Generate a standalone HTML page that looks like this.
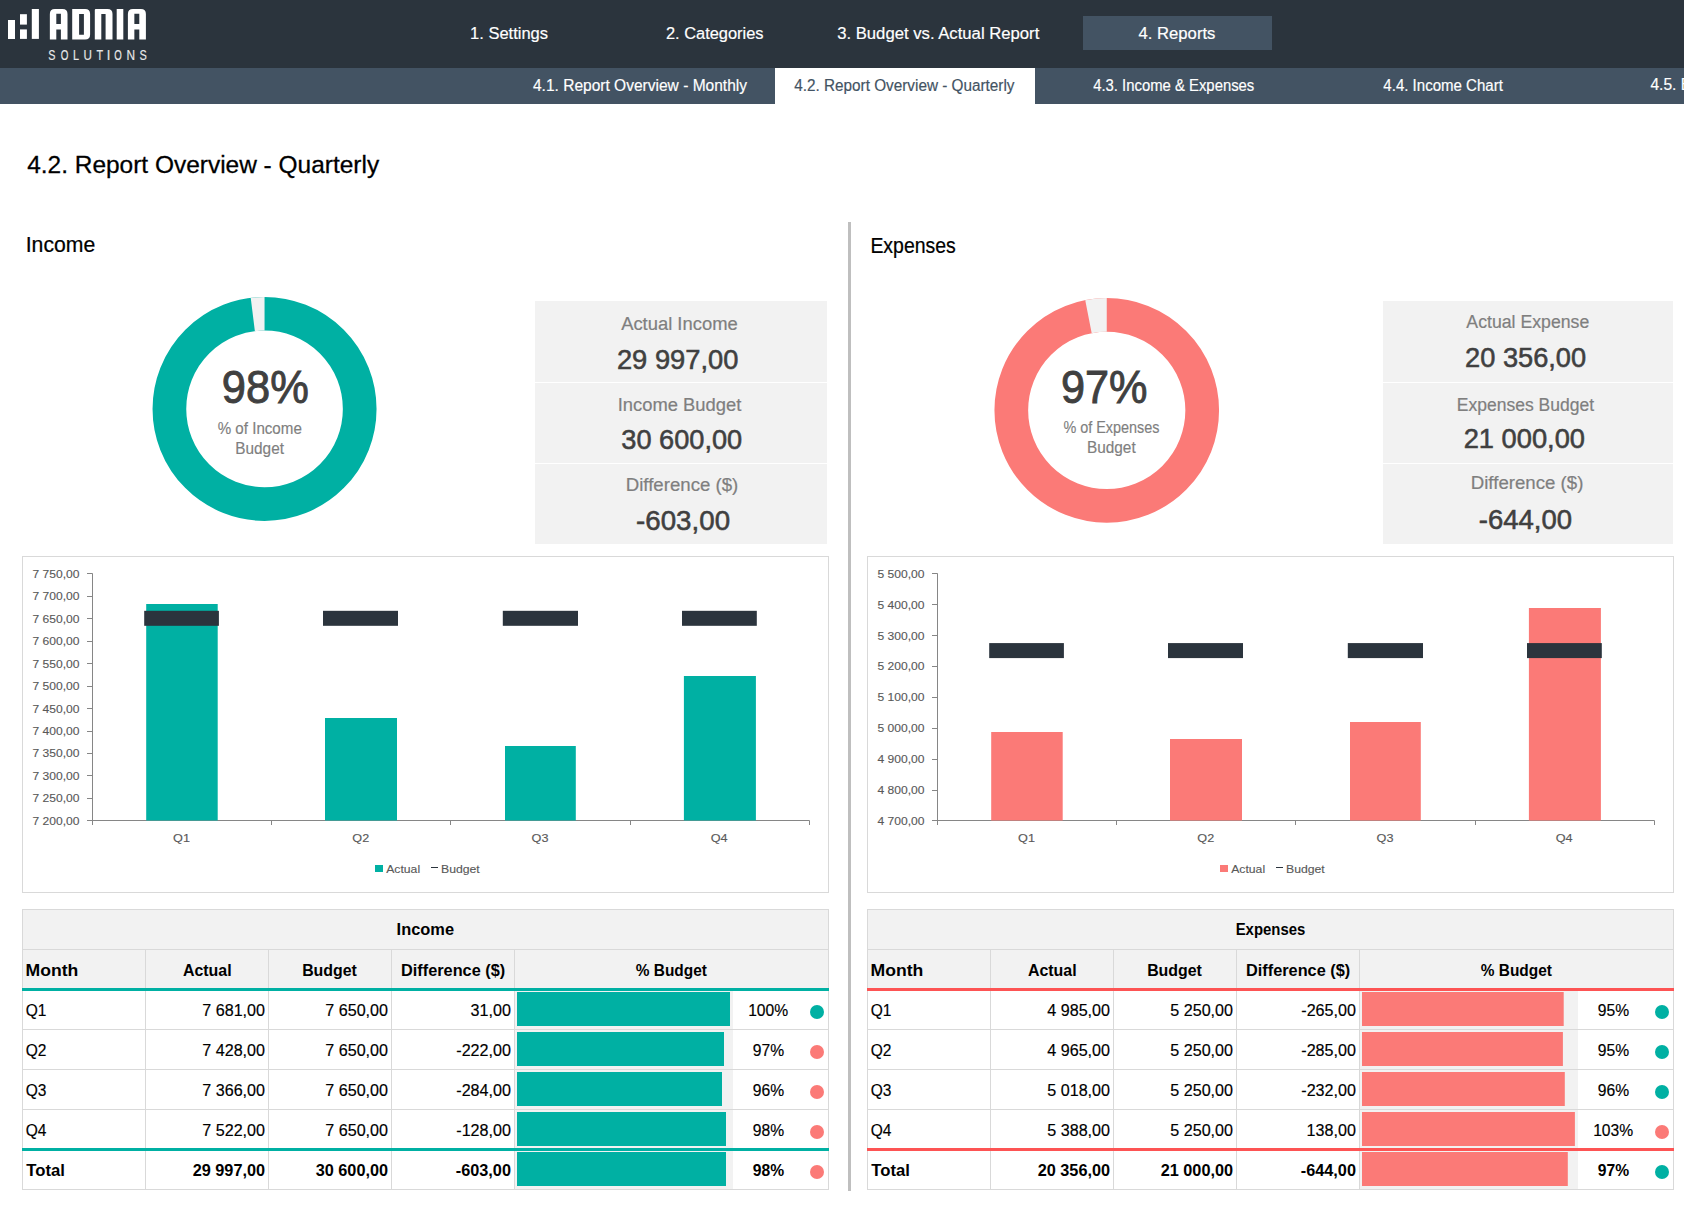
<!DOCTYPE html>
<html><head><meta charset="utf-8"><title>4.2. Report Overview - Quarterly</title>
<style>html,body{margin:0;padding:0;background:#fff;width:1688px;height:1208px;overflow:hidden;font-family:"Liberation Sans",sans-serif}</style>
</head><body>
<svg width="1688" height="1208" viewBox="0 0 1688 1208" style="position:absolute;left:0;top:0" font-family="Liberation Sans, sans-serif">
<rect x="0" y="0" width="1688" height="1208" fill="#fff"/>
<rect x="0" y="0" width="1684" height="68" fill="#2b343d"/>
<rect x="0" y="68" width="1684" height="36" fill="#435363"/>
<rect x="1083" y="16" width="189" height="34" fill="#435363"/>
<rect x="775" y="68" width="260" height="36" fill="#fff"/>
<g fill="#fff">
<rect x="8" y="20" width="7" height="19"/>
<rect x="20" y="14.2" width="6.9" height="10.4"/>
<rect x="20" y="29.4" width="6.9" height="9.5"/>
<rect x="31.8" y="9" width="7.1" height="29.9"/>
<path fill-rule="evenodd" d="M49.85,39.5 V14 Q49.85,9 54.85,9 H62.5 Q67.5,9 67.5,14 V39.5 H60.9 V29.6 H56.300000000000004 V39.5 Z M56.300000000000004,13.7 H60.9 V24 H56.300000000000004 Z"/>
<path fill-rule="evenodd" d="M72.2,9 H85.1 Q90.1,9 90.1,14 V34.5 Q90.1,39.5 85.1,39.5 H72.2 Z M79.1,14 H83.9 V34.7 H79.1 Z"/>
<path d="M94.8,39.5 V10 Q94.8,9 95.8,9 H107.5 Q112.5,9 112.5,14 V39.5 H105.6 V14 H101.3 V39.5 Z"/>
<rect x="116.7" y="9" width="6.6" height="30.5"/>
<path fill-rule="evenodd" d="M127.9,39.5 V14 Q127.9,9 132.9,9 H140.9 Q145.9,9 145.9,14 V39.5 H139.3 V29.6 H134.35 V39.5 Z M134.35,13.7 H139.3 V24 H134.35 Z"/>
</g>
<text x="48.32" y="59.70" font-size="13.80" font-weight="normal" fill="#e8e8e8" stroke="#e8e8e8" stroke-width="0.15" textLength="7.16" lengthAdjust="spacingAndGlyphs">S</text>
<text x="60.63" y="59.70" font-size="13.80" font-weight="normal" fill="#e8e8e8" stroke="#e8e8e8" stroke-width="0.15" textLength="7.64" lengthAdjust="spacingAndGlyphs">O</text>
<text x="73.00" y="59.70" font-size="13.80" font-weight="normal" fill="#e8e8e8" stroke="#e8e8e8" stroke-width="0.15" textLength="6.07" lengthAdjust="spacingAndGlyphs">L</text>
<text x="83.50" y="59.70" font-size="13.80" font-weight="normal" fill="#e8e8e8" stroke="#e8e8e8" stroke-width="0.15" textLength="8.40" lengthAdjust="spacingAndGlyphs">U</text>
<text x="96.46" y="59.70" font-size="13.80" font-weight="normal" fill="#e8e8e8" stroke="#e8e8e8" stroke-width="0.15" textLength="6.60" lengthAdjust="spacingAndGlyphs">T</text>
<text x="106.80" y="59.70" font-size="13.80" font-weight="normal" fill="#e8e8e8" stroke="#e8e8e8" stroke-width="0.15" textLength="3.60" lengthAdjust="spacingAndGlyphs">I</text>
<text x="114.24" y="59.70" font-size="13.80" font-weight="normal" fill="#e8e8e8" stroke="#e8e8e8" stroke-width="0.15" textLength="7.52" lengthAdjust="spacingAndGlyphs">O</text>
<text x="126.52" y="59.70" font-size="13.80" font-weight="normal" fill="#e8e8e8" stroke="#e8e8e8" stroke-width="0.15" textLength="8.55" lengthAdjust="spacingAndGlyphs">N</text>
<text x="139.61" y="59.70" font-size="13.80" font-weight="normal" fill="#e8e8e8" stroke="#e8e8e8" stroke-width="0.15" textLength="7.28" lengthAdjust="spacingAndGlyphs">S</text>
<text x="470.06" y="39.30" font-size="16.70" font-weight="normal" fill="#fff" stroke="#fff" stroke-width="0.18" textLength="78.02" lengthAdjust="spacingAndGlyphs">1. Settings</text>
<text x="665.98" y="39.30" font-size="16.70" font-weight="normal" fill="#fff" stroke="#fff" stroke-width="0.18" textLength="97.60" lengthAdjust="spacingAndGlyphs">2. Categories</text>
<text x="837.17" y="39.30" font-size="16.70" font-weight="normal" fill="#fff" stroke="#fff" stroke-width="0.18" textLength="202.17" lengthAdjust="spacingAndGlyphs">3. Budget vs. Actual Report</text>
<text x="1138.53" y="39.30" font-size="16.70" font-weight="normal" fill="#fff" stroke="#fff" stroke-width="0.18" textLength="76.87" lengthAdjust="spacingAndGlyphs">4. Reports</text>
<text x="532.95" y="91.00" font-size="16.00" font-weight="normal" fill="#fff" stroke="#fff" stroke-width="0.18" textLength="214.10" lengthAdjust="spacingAndGlyphs">4.1. Report Overview - Monthly</text>
<text x="794.26" y="91.00" font-size="16.00" font-weight="normal" fill="#435363" stroke="#435363" stroke-width="0.18" textLength="220.27" lengthAdjust="spacingAndGlyphs">4.2. Report Overview - Quarterly</text>
<text x="1093.17" y="90.60" font-size="16.00" font-weight="normal" fill="#fff" stroke="#fff" stroke-width="0.18" textLength="161.15" lengthAdjust="spacingAndGlyphs">4.3. Income &amp; Expenses</text>
<text x="1383.36" y="90.60" font-size="16.00" font-weight="normal" fill="#fff" stroke="#fff" stroke-width="0.18" textLength="119.47" lengthAdjust="spacingAndGlyphs">4.4. Income Chart</text>
<clipPath id="cp45"><rect x="0" y="68" width="1684" height="36"/></clipPath>
<text x="1650.45" y="90.40" font-size="16.00" font-weight="normal" fill="#fff" stroke="#fff" stroke-width="0.18" textLength="140.74" lengthAdjust="spacingAndGlyphs" clip-path="url(#cp45)">4.5. Expenses Chart</text>
<text x="27.15" y="173.10" font-size="24.40" font-weight="normal" fill="#000" stroke="#000" stroke-width="0.27" textLength="351.99" lengthAdjust="spacingAndGlyphs">4.2. Report Overview - Quarterly</text>
<text x="25.74" y="251.90" font-size="21.70" font-weight="normal" fill="#000" stroke="#000" stroke-width="0.24" textLength="69.50" lengthAdjust="spacingAndGlyphs">Income</text>
<text x="870.40" y="252.60" font-size="21.70" font-weight="normal" fill="#000" stroke="#000" stroke-width="0.24" textLength="85.37" lengthAdjust="spacingAndGlyphs">Expenses</text>
<rect x="848" y="222" width="3" height="969" fill="#bfbfbf"/>
<circle cx="264.55" cy="408.9" r="95.15" fill="none" stroke="#00b0a3" stroke-width="33.70"/>
<path fill="#f2f2f2" d="M250.72,297.76 A112,112 0 0 1 264.55,296.90 L264.55,330.60 A78.3,78.3 0 0 0 254.88,331.20 Z"/>
<circle cx="1106.75" cy="410.35" r="95.45" fill="none" stroke="#fb7a77" stroke-width="33.70"/>
<path fill="#f2f2f2" d="M1085.25,300.13 A112.3,112.3 0 0 1 1106.75,298.05 L1106.75,331.75 A78.6,78.6 0 0 0 1091.70,333.20 Z"/>
<text x="221.84" y="402.60" font-size="45.50" font-weight="normal" fill="#404040" stroke="#404040" stroke-width="0.91" textLength="86.94" lengthAdjust="spacingAndGlyphs">98%</text>
<text x="217.67" y="433.90" font-size="15.80" font-weight="normal" fill="#7f7f7f" stroke="#7f7f7f" stroke-width="0.17" textLength="84.19" lengthAdjust="spacingAndGlyphs">% of Income</text>
<text x="235.23" y="453.90" font-size="15.80" font-weight="normal" fill="#7f7f7f" stroke="#7f7f7f" stroke-width="0.17" textLength="48.78" lengthAdjust="spacingAndGlyphs">Budget</text>
<text x="1060.95" y="402.60" font-size="45.50" font-weight="normal" fill="#404040" stroke="#404040" stroke-width="0.91" textLength="86.52" lengthAdjust="spacingAndGlyphs">97%</text>
<text x="1063.40" y="432.60" font-size="15.80" font-weight="normal" fill="#7f7f7f" stroke="#7f7f7f" stroke-width="0.17" textLength="96.12" lengthAdjust="spacingAndGlyphs">% of Expenses</text>
<text x="1086.93" y="452.50" font-size="15.80" font-weight="normal" fill="#7f7f7f" stroke="#7f7f7f" stroke-width="0.17" textLength="48.78" lengthAdjust="spacingAndGlyphs">Budget</text>
<rect x="535" y="301" width="292" height="243" fill="#f2f2f2"/>
<rect x="535" y="382" width="292" height="1" fill="#fff"/>
<rect x="535" y="463" width="292" height="1" fill="#fff"/>
<rect x="1383" y="301" width="290" height="243" fill="#f2f2f2"/>
<rect x="1383" y="382" width="290" height="1" fill="#fff"/>
<rect x="1383" y="463" width="290" height="1" fill="#fff"/>
<text x="621.15" y="329.90" font-size="18.80" font-weight="normal" fill="#7f7f7f" stroke="#7f7f7f" stroke-width="0.21" textLength="116.56" lengthAdjust="spacingAndGlyphs">Actual Income</text>
<text x="616.94" y="368.90" font-size="27.40" font-weight="normal" fill="#404040" stroke="#404040" stroke-width="0.55" textLength="121.43" lengthAdjust="spacingAndGlyphs">29 997,00</text>
<text x="617.70" y="411.10" font-size="18.80" font-weight="normal" fill="#7f7f7f" stroke="#7f7f7f" stroke-width="0.21" textLength="123.62" lengthAdjust="spacingAndGlyphs">Income Budget</text>
<text x="621.28" y="448.70" font-size="27.40" font-weight="normal" fill="#404040" stroke="#404040" stroke-width="0.55" textLength="120.98" lengthAdjust="spacingAndGlyphs">30 600,00</text>
<text x="625.76" y="491.10" font-size="18.80" font-weight="normal" fill="#7f7f7f" stroke="#7f7f7f" stroke-width="0.21" textLength="112.55" lengthAdjust="spacingAndGlyphs">Difference ($)</text>
<text x="636.05" y="529.60" font-size="27.40" font-weight="normal" fill="#404040" stroke="#404040" stroke-width="0.55" textLength="94.03" lengthAdjust="spacingAndGlyphs">-603,00</text>
<text x="1466.36" y="328.10" font-size="18.80" font-weight="normal" fill="#7f7f7f" stroke="#7f7f7f" stroke-width="0.21" textLength="122.92" lengthAdjust="spacingAndGlyphs">Actual Expense</text>
<text x="1465.04" y="366.80" font-size="27.40" font-weight="normal" fill="#404040" stroke="#404040" stroke-width="0.55" textLength="121.12" lengthAdjust="spacingAndGlyphs">20 356,00</text>
<text x="1456.86" y="410.70" font-size="18.80" font-weight="normal" fill="#7f7f7f" stroke="#7f7f7f" stroke-width="0.21" textLength="137.20" lengthAdjust="spacingAndGlyphs">Expenses Budget</text>
<text x="1463.64" y="447.50" font-size="27.40" font-weight="normal" fill="#404040" stroke="#404040" stroke-width="0.55" textLength="121.43" lengthAdjust="spacingAndGlyphs">21 000,00</text>
<text x="1470.76" y="488.90" font-size="18.80" font-weight="normal" fill="#7f7f7f" stroke="#7f7f7f" stroke-width="0.21" textLength="112.65" lengthAdjust="spacingAndGlyphs">Difference ($)</text>
<text x="1478.76" y="528.70" font-size="27.40" font-weight="normal" fill="#404040" stroke="#404040" stroke-width="0.55" textLength="93.32" lengthAdjust="spacingAndGlyphs">-644,00</text>
<rect x="22.5" y="556.5" width="806" height="336" fill="#fff" stroke="#d9d9d9" stroke-width="1"/>
<g stroke="#868686" stroke-width="1" fill="none">
<path d="M92.5,573.4 V820.5"/>
<path d="M87,820.5 H809.5"/>
<path d="M87,820.5 H92.5"/>
<path d="M87,798.5 H92.5"/>
<path d="M87,775.5 H92.5"/>
<path d="M87,753.5 H92.5"/>
<path d="M87,731.5 H92.5"/>
<path d="M87,708.5 H92.5"/>
<path d="M87,686.5 H92.5"/>
<path d="M87,663.5 H92.5"/>
<path d="M87,641.5 H92.5"/>
<path d="M87,618.5 H92.5"/>
<path d="M87,596.5 H92.5"/>
<path d="M87,573.5 H92.5"/>
<path d="M92.5,820.5 V825"/>
<path d="M271.5,820.5 V825"/>
<path d="M450.5,820.5 V825"/>
<path d="M630.5,820.5 V825"/>
<path d="M809.5,820.5 V825"/>
</g>
<text x="32.45" y="824.80" font-size="11.50" font-weight="normal" fill="#595959" stroke="#595959" stroke-width="0.13" textLength="47.00" lengthAdjust="spacingAndGlyphs">7 200,00</text>
<text x="32.45" y="802.35" font-size="11.50" font-weight="normal" fill="#595959" stroke="#595959" stroke-width="0.13" textLength="47.00" lengthAdjust="spacingAndGlyphs">7 250,00</text>
<text x="32.45" y="779.89" font-size="11.50" font-weight="normal" fill="#595959" stroke="#595959" stroke-width="0.13" textLength="47.00" lengthAdjust="spacingAndGlyphs">7 300,00</text>
<text x="32.45" y="757.44" font-size="11.50" font-weight="normal" fill="#595959" stroke="#595959" stroke-width="0.13" textLength="47.00" lengthAdjust="spacingAndGlyphs">7 350,00</text>
<text x="32.45" y="734.98" font-size="11.50" font-weight="normal" fill="#595959" stroke="#595959" stroke-width="0.13" textLength="47.00" lengthAdjust="spacingAndGlyphs">7 400,00</text>
<text x="32.45" y="712.53" font-size="11.50" font-weight="normal" fill="#595959" stroke="#595959" stroke-width="0.13" textLength="47.00" lengthAdjust="spacingAndGlyphs">7 450,00</text>
<text x="32.45" y="690.07" font-size="11.50" font-weight="normal" fill="#595959" stroke="#595959" stroke-width="0.13" textLength="47.00" lengthAdjust="spacingAndGlyphs">7 500,00</text>
<text x="32.45" y="667.62" font-size="11.50" font-weight="normal" fill="#595959" stroke="#595959" stroke-width="0.13" textLength="47.00" lengthAdjust="spacingAndGlyphs">7 550,00</text>
<text x="32.45" y="645.16" font-size="11.50" font-weight="normal" fill="#595959" stroke="#595959" stroke-width="0.13" textLength="47.00" lengthAdjust="spacingAndGlyphs">7 600,00</text>
<text x="32.45" y="622.71" font-size="11.50" font-weight="normal" fill="#595959" stroke="#595959" stroke-width="0.13" textLength="47.00" lengthAdjust="spacingAndGlyphs">7 650,00</text>
<text x="32.45" y="600.25" font-size="11.50" font-weight="normal" fill="#595959" stroke="#595959" stroke-width="0.13" textLength="47.00" lengthAdjust="spacingAndGlyphs">7 700,00</text>
<text x="32.45" y="577.80" font-size="11.50" font-weight="normal" fill="#595959" stroke="#595959" stroke-width="0.13" textLength="47.00" lengthAdjust="spacingAndGlyphs">7 750,00</text>
<rect x="146.20" y="604" width="71.50" height="216.50" fill="#00b0a3"/>
<rect x="325.00" y="718" width="72.00" height="102.50" fill="#00b0a3"/>
<rect x="505.00" y="746" width="70.80" height="74.50" fill="#00b0a3"/>
<rect x="683.90" y="676" width="72.00" height="144.50" fill="#00b0a3"/>
<rect x="144.20" y="610.81" width="74.70" height="15" fill="#2b343d"/>
<rect x="323.00" y="610.81" width="75.00" height="15" fill="#2b343d"/>
<rect x="502.80" y="610.81" width="75.20" height="15" fill="#2b343d"/>
<rect x="682.00" y="610.81" width="74.80" height="15" fill="#2b343d"/>
<text x="173.13" y="841.80" font-size="11.60" font-weight="normal" fill="#595959" stroke="#595959" stroke-width="0.13" textLength="16.87" lengthAdjust="spacingAndGlyphs">Q1</text>
<text x="352.39" y="841.80" font-size="11.60" font-weight="normal" fill="#595959" stroke="#595959" stroke-width="0.13" textLength="16.87" lengthAdjust="spacingAndGlyphs">Q2</text>
<text x="531.59" y="841.80" font-size="11.60" font-weight="normal" fill="#595959" stroke="#595959" stroke-width="0.13" textLength="16.87" lengthAdjust="spacingAndGlyphs">Q3</text>
<text x="710.75" y="841.80" font-size="11.60" font-weight="normal" fill="#595959" stroke="#595959" stroke-width="0.13" textLength="16.87" lengthAdjust="spacingAndGlyphs">Q4</text>
<rect x="375" y="865" width="8" height="7" fill="#00b0a3"/>
<text x="386.17" y="872.70" font-size="11.20" font-weight="normal" fill="#595959" stroke="#595959" stroke-width="0.12" textLength="33.95" lengthAdjust="spacingAndGlyphs">Actual</text>
<rect x="431" y="867" width="7" height="1" fill="#2b343d"/>
<text x="440.99" y="872.70" font-size="11.20" font-weight="normal" fill="#595959" stroke="#595959" stroke-width="0.12" textLength="38.80" lengthAdjust="spacingAndGlyphs">Budget</text>
<rect x="867.5" y="556.5" width="806" height="336" fill="#fff" stroke="#d9d9d9" stroke-width="1"/>
<g stroke="#868686" stroke-width="1" fill="none">
<path d="M937.5,573.4 V820.5"/>
<path d="M932,820.5 H1654.5"/>
<path d="M932,820.5 H937.5"/>
<path d="M932,790.5 H937.5"/>
<path d="M932,759.5 H937.5"/>
<path d="M932,728.5 H937.5"/>
<path d="M932,697.5 H937.5"/>
<path d="M932,666.5 H937.5"/>
<path d="M932,635.5 H937.5"/>
<path d="M932,604.5 H937.5"/>
<path d="M932,573.5 H937.5"/>
<path d="M937.5,820.5 V825"/>
<path d="M1116.5,820.5 V825"/>
<path d="M1295.5,820.5 V825"/>
<path d="M1475.5,820.5 V825"/>
<path d="M1654.5,820.5 V825"/>
</g>
<text x="877.45" y="824.80" font-size="11.50" font-weight="normal" fill="#595959" stroke="#595959" stroke-width="0.13" textLength="47.00" lengthAdjust="spacingAndGlyphs">4 700,00</text>
<text x="877.45" y="793.92" font-size="11.50" font-weight="normal" fill="#595959" stroke="#595959" stroke-width="0.13" textLength="47.00" lengthAdjust="spacingAndGlyphs">4 800,00</text>
<text x="877.45" y="763.05" font-size="11.50" font-weight="normal" fill="#595959" stroke="#595959" stroke-width="0.13" textLength="47.00" lengthAdjust="spacingAndGlyphs">4 900,00</text>
<text x="877.45" y="732.17" font-size="11.50" font-weight="normal" fill="#595959" stroke="#595959" stroke-width="0.13" textLength="47.00" lengthAdjust="spacingAndGlyphs">5 000,00</text>
<text x="877.45" y="701.30" font-size="11.50" font-weight="normal" fill="#595959" stroke="#595959" stroke-width="0.13" textLength="47.00" lengthAdjust="spacingAndGlyphs">5 100,00</text>
<text x="877.45" y="670.42" font-size="11.50" font-weight="normal" fill="#595959" stroke="#595959" stroke-width="0.13" textLength="47.00" lengthAdjust="spacingAndGlyphs">5 200,00</text>
<text x="877.45" y="639.55" font-size="11.50" font-weight="normal" fill="#595959" stroke="#595959" stroke-width="0.13" textLength="47.00" lengthAdjust="spacingAndGlyphs">5 300,00</text>
<text x="877.45" y="608.67" font-size="11.50" font-weight="normal" fill="#595959" stroke="#595959" stroke-width="0.13" textLength="47.00" lengthAdjust="spacingAndGlyphs">5 400,00</text>
<text x="877.45" y="577.80" font-size="11.50" font-weight="normal" fill="#595959" stroke="#595959" stroke-width="0.13" textLength="47.00" lengthAdjust="spacingAndGlyphs">5 500,00</text>
<rect x="991.20" y="732" width="71.50" height="88.50" fill="#fb7a77"/>
<rect x="1170.00" y="739" width="72.00" height="81.50" fill="#fb7a77"/>
<rect x="1350.00" y="722" width="70.80" height="98.50" fill="#fb7a77"/>
<rect x="1528.90" y="608" width="72.00" height="212.50" fill="#fb7a77"/>
<rect x="989.20" y="643.09" width="74.70" height="15" fill="#2b343d"/>
<rect x="1168.00" y="643.09" width="75.00" height="15" fill="#2b343d"/>
<rect x="1347.80" y="643.09" width="75.20" height="15" fill="#2b343d"/>
<rect x="1527.00" y="643.09" width="74.80" height="15" fill="#2b343d"/>
<text x="1018.13" y="841.80" font-size="11.60" font-weight="normal" fill="#595959" stroke="#595959" stroke-width="0.13" textLength="16.87" lengthAdjust="spacingAndGlyphs">Q1</text>
<text x="1197.39" y="841.80" font-size="11.60" font-weight="normal" fill="#595959" stroke="#595959" stroke-width="0.13" textLength="16.87" lengthAdjust="spacingAndGlyphs">Q2</text>
<text x="1376.59" y="841.80" font-size="11.60" font-weight="normal" fill="#595959" stroke="#595959" stroke-width="0.13" textLength="16.87" lengthAdjust="spacingAndGlyphs">Q3</text>
<text x="1555.75" y="841.80" font-size="11.60" font-weight="normal" fill="#595959" stroke="#595959" stroke-width="0.13" textLength="16.87" lengthAdjust="spacingAndGlyphs">Q4</text>
<rect x="1220" y="865" width="8" height="7" fill="#fb7a77"/>
<text x="1231.17" y="872.70" font-size="11.20" font-weight="normal" fill="#595959" stroke="#595959" stroke-width="0.12" textLength="33.95" lengthAdjust="spacingAndGlyphs">Actual</text>
<rect x="1276" y="867" width="7" height="1" fill="#2b343d"/>
<text x="1285.99" y="872.70" font-size="11.20" font-weight="normal" fill="#595959" stroke="#595959" stroke-width="0.12" textLength="38.80" lengthAdjust="spacingAndGlyphs">Budget</text>
<rect x="22" y="909" width="806" height="79" fill="#f2f2f2"/>
<rect x="515" y="991" width="218" height="157" fill="#f2f2f2"/>
<rect x="515" y="1151" width="218" height="38" fill="#f2f2f2"/>
<g fill="#d9d9d9">
<rect x="22" y="909" width="807" height="1"/>
<rect x="22" y="1189" width="807" height="1"/>
<rect x="22" y="909" width="1" height="281"/>
<rect x="828" y="909" width="1" height="281"/>
<rect x="22" y="949" width="806" height="1"/>
<rect x="22" y="1029" width="806" height="1"/>
<rect x="22" y="1069" width="806" height="1"/>
<rect x="22" y="1109" width="806" height="1"/>
<rect x="145" y="949" width="1" height="240"/>
<rect x="268" y="949" width="1" height="240"/>
<rect x="391" y="949" width="1" height="240"/>
<rect x="514" y="949" width="1" height="240"/>
</g>
<rect x="22" y="988" width="807" height="3" fill="#00b0a3"/>
<rect x="22" y="1148" width="807" height="3" fill="#00b0a3"/>
<rect x="517" y="992" width="213" height="34" fill="#00b0a3"/>
<rect x="517" y="1032" width="207" height="34" fill="#00b0a3"/>
<rect x="517" y="1072" width="205" height="34" fill="#00b0a3"/>
<rect x="517" y="1112" width="209" height="34" fill="#00b0a3"/>
<rect x="517" y="1152" width="209" height="34" fill="#00b0a3"/>
<circle cx="817" cy="1012" r="7" fill="#00b0a3"/>
<circle cx="817" cy="1052" r="7" fill="#fb7a77"/>
<circle cx="817" cy="1092" r="7" fill="#fb7a77"/>
<circle cx="817" cy="1132" r="7" fill="#fb7a77"/>
<circle cx="817" cy="1172" r="7" fill="#fb7a77"/>
<text x="396.58" y="935.20" font-size="16.70" font-weight="bold" fill="#000" textLength="57.47" lengthAdjust="spacingAndGlyphs">Income</text>
<text x="25.61" y="976.00" font-size="16.60" font-weight="bold" fill="#000" textLength="52.76" lengthAdjust="spacingAndGlyphs">Month</text>
<text x="182.90" y="976.00" font-size="16.60" font-weight="bold" fill="#000" textLength="48.73" lengthAdjust="spacingAndGlyphs">Actual</text>
<text x="302.13" y="976.00" font-size="16.60" font-weight="bold" fill="#000" textLength="54.80" lengthAdjust="spacingAndGlyphs">Budget</text>
<text x="401.10" y="976.00" font-size="16.60" font-weight="bold" fill="#000" textLength="104.03" lengthAdjust="spacingAndGlyphs">Difference ($)</text>
<text x="635.81" y="976.00" font-size="16.60" font-weight="bold" fill="#000" textLength="71.09" lengthAdjust="spacingAndGlyphs">% Budget</text>
<text x="25.76" y="1015.80" font-size="15.80" font-weight="normal" fill="#000" stroke="#000" stroke-width="0.17" textLength="20.70" lengthAdjust="spacingAndGlyphs">Q1</text>
<text x="202.27" y="1015.80" font-size="15.80" font-weight="normal" fill="#000" stroke="#000" stroke-width="0.17" textLength="62.74" lengthAdjust="spacingAndGlyphs">7 681,00</text>
<text x="325.27" y="1015.80" font-size="15.80" font-weight="normal" fill="#000" stroke="#000" stroke-width="0.17" textLength="62.74" lengthAdjust="spacingAndGlyphs">7 650,00</text>
<text x="470.57" y="1015.80" font-size="15.80" font-weight="normal" fill="#000" stroke="#000" stroke-width="0.17" textLength="40.33" lengthAdjust="spacingAndGlyphs">31,00</text>
<text x="748.18" y="1015.80" font-size="15.80" font-weight="normal" fill="#000" stroke="#000" stroke-width="0.17" textLength="40.01" lengthAdjust="spacingAndGlyphs">100%</text>
<text x="25.76" y="1055.80" font-size="15.80" font-weight="normal" fill="#000" stroke="#000" stroke-width="0.17" textLength="20.70" lengthAdjust="spacingAndGlyphs">Q2</text>
<text x="202.27" y="1055.80" font-size="15.80" font-weight="normal" fill="#000" stroke="#000" stroke-width="0.17" textLength="62.74" lengthAdjust="spacingAndGlyphs">7 428,00</text>
<text x="325.27" y="1055.80" font-size="15.80" font-weight="normal" fill="#000" stroke="#000" stroke-width="0.17" textLength="62.74" lengthAdjust="spacingAndGlyphs">7 650,00</text>
<text x="456.27" y="1055.80" font-size="15.80" font-weight="normal" fill="#000" stroke="#000" stroke-width="0.17" textLength="54.66" lengthAdjust="spacingAndGlyphs">-222,00</text>
<text x="752.74" y="1055.80" font-size="15.80" font-weight="normal" fill="#000" stroke="#000" stroke-width="0.17" textLength="31.31" lengthAdjust="spacingAndGlyphs">97%</text>
<text x="25.76" y="1095.80" font-size="15.80" font-weight="normal" fill="#000" stroke="#000" stroke-width="0.17" textLength="20.70" lengthAdjust="spacingAndGlyphs">Q3</text>
<text x="202.27" y="1095.80" font-size="15.80" font-weight="normal" fill="#000" stroke="#000" stroke-width="0.17" textLength="62.74" lengthAdjust="spacingAndGlyphs">7 366,00</text>
<text x="325.27" y="1095.80" font-size="15.80" font-weight="normal" fill="#000" stroke="#000" stroke-width="0.17" textLength="62.74" lengthAdjust="spacingAndGlyphs">7 650,00</text>
<text x="456.27" y="1095.80" font-size="15.80" font-weight="normal" fill="#000" stroke="#000" stroke-width="0.17" textLength="54.66" lengthAdjust="spacingAndGlyphs">-284,00</text>
<text x="752.74" y="1095.80" font-size="15.80" font-weight="normal" fill="#000" stroke="#000" stroke-width="0.17" textLength="31.31" lengthAdjust="spacingAndGlyphs">96%</text>
<text x="25.76" y="1135.80" font-size="15.80" font-weight="normal" fill="#000" stroke="#000" stroke-width="0.17" textLength="20.70" lengthAdjust="spacingAndGlyphs">Q4</text>
<text x="202.27" y="1135.80" font-size="15.80" font-weight="normal" fill="#000" stroke="#000" stroke-width="0.17" textLength="62.74" lengthAdjust="spacingAndGlyphs">7 522,00</text>
<text x="325.27" y="1135.80" font-size="15.80" font-weight="normal" fill="#000" stroke="#000" stroke-width="0.17" textLength="62.74" lengthAdjust="spacingAndGlyphs">7 650,00</text>
<text x="456.27" y="1135.80" font-size="15.80" font-weight="normal" fill="#000" stroke="#000" stroke-width="0.17" textLength="54.66" lengthAdjust="spacingAndGlyphs">-128,00</text>
<text x="752.74" y="1135.80" font-size="15.80" font-weight="normal" fill="#000" stroke="#000" stroke-width="0.17" textLength="31.31" lengthAdjust="spacingAndGlyphs">98%</text>
<text x="26.33" y="1175.80" font-size="15.80" font-weight="bold" fill="#000" textLength="38.62" lengthAdjust="spacingAndGlyphs">Total</text>
<text x="192.67" y="1175.80" font-size="15.80" font-weight="bold" fill="#000" textLength="72.40" lengthAdjust="spacingAndGlyphs">29 997,00</text>
<text x="315.67" y="1175.80" font-size="15.80" font-weight="bold" fill="#000" textLength="72.40" lengthAdjust="spacingAndGlyphs">30 600,00</text>
<text x="455.78" y="1175.80" font-size="15.80" font-weight="bold" fill="#000" textLength="55.20" lengthAdjust="spacingAndGlyphs">-603,00</text>
<text x="752.78" y="1175.80" font-size="15.80" font-weight="bold" fill="#000" textLength="31.31" lengthAdjust="spacingAndGlyphs">98%</text>
<rect x="867" y="909" width="806" height="79" fill="#f2f2f2"/>
<rect x="1360" y="991" width="218" height="157" fill="#f2f2f2"/>
<rect x="1360" y="1151" width="218" height="38" fill="#f2f2f2"/>
<g fill="#d9d9d9">
<rect x="867" y="909" width="807" height="1"/>
<rect x="867" y="1189" width="807" height="1"/>
<rect x="867" y="909" width="1" height="281"/>
<rect x="1673" y="909" width="1" height="281"/>
<rect x="867" y="949" width="806" height="1"/>
<rect x="867" y="1029" width="806" height="1"/>
<rect x="867" y="1069" width="806" height="1"/>
<rect x="867" y="1109" width="806" height="1"/>
<rect x="990" y="949" width="1" height="240"/>
<rect x="1113" y="949" width="1" height="240"/>
<rect x="1236" y="949" width="1" height="240"/>
<rect x="1359" y="949" width="1" height="240"/>
</g>
<rect x="867" y="988" width="807" height="3" fill="#fd5454"/>
<rect x="867" y="1148" width="807" height="3" fill="#fd5454"/>
<rect x="1362" y="992" width="201.7" height="34" fill="#fb7a77"/>
<rect x="1362" y="1032" width="200.9" height="34" fill="#fb7a77"/>
<rect x="1362" y="1072" width="202.8" height="34" fill="#fb7a77"/>
<rect x="1362" y="1112" width="212.9" height="34" fill="#fb7a77"/>
<rect x="1362" y="1152" width="205.8" height="34" fill="#fb7a77"/>
<circle cx="1662" cy="1012" r="7" fill="#00b0a3"/>
<circle cx="1662" cy="1052" r="7" fill="#00b0a3"/>
<circle cx="1662" cy="1092" r="7" fill="#00b0a3"/>
<circle cx="1662" cy="1132" r="7" fill="#fb7a77"/>
<circle cx="1662" cy="1172" r="7" fill="#00b0a3"/>
<text x="1235.68" y="935.20" font-size="16.70" font-weight="bold" fill="#000" textLength="69.56" lengthAdjust="spacingAndGlyphs">Expenses</text>
<text x="870.61" y="976.00" font-size="16.60" font-weight="bold" fill="#000" textLength="52.76" lengthAdjust="spacingAndGlyphs">Month</text>
<text x="1027.90" y="976.00" font-size="16.60" font-weight="bold" fill="#000" textLength="48.73" lengthAdjust="spacingAndGlyphs">Actual</text>
<text x="1147.13" y="976.00" font-size="16.60" font-weight="bold" fill="#000" textLength="54.80" lengthAdjust="spacingAndGlyphs">Budget</text>
<text x="1246.10" y="976.00" font-size="16.60" font-weight="bold" fill="#000" textLength="104.03" lengthAdjust="spacingAndGlyphs">Difference ($)</text>
<text x="1480.81" y="976.00" font-size="16.60" font-weight="bold" fill="#000" textLength="71.09" lengthAdjust="spacingAndGlyphs">% Budget</text>
<text x="870.76" y="1015.80" font-size="15.80" font-weight="normal" fill="#000" stroke="#000" stroke-width="0.17" textLength="20.70" lengthAdjust="spacingAndGlyphs">Q1</text>
<text x="1047.27" y="1015.80" font-size="15.80" font-weight="normal" fill="#000" stroke="#000" stroke-width="0.17" textLength="62.74" lengthAdjust="spacingAndGlyphs">4 985,00</text>
<text x="1170.27" y="1015.80" font-size="15.80" font-weight="normal" fill="#000" stroke="#000" stroke-width="0.17" textLength="62.74" lengthAdjust="spacingAndGlyphs">5 250,00</text>
<text x="1301.27" y="1015.80" font-size="15.80" font-weight="normal" fill="#000" stroke="#000" stroke-width="0.17" textLength="54.66" lengthAdjust="spacingAndGlyphs">-265,00</text>
<text x="1597.74" y="1015.80" font-size="15.80" font-weight="normal" fill="#000" stroke="#000" stroke-width="0.17" textLength="31.31" lengthAdjust="spacingAndGlyphs">95%</text>
<text x="870.76" y="1055.80" font-size="15.80" font-weight="normal" fill="#000" stroke="#000" stroke-width="0.17" textLength="20.70" lengthAdjust="spacingAndGlyphs">Q2</text>
<text x="1047.27" y="1055.80" font-size="15.80" font-weight="normal" fill="#000" stroke="#000" stroke-width="0.17" textLength="62.74" lengthAdjust="spacingAndGlyphs">4 965,00</text>
<text x="1170.27" y="1055.80" font-size="15.80" font-weight="normal" fill="#000" stroke="#000" stroke-width="0.17" textLength="62.74" lengthAdjust="spacingAndGlyphs">5 250,00</text>
<text x="1301.27" y="1055.80" font-size="15.80" font-weight="normal" fill="#000" stroke="#000" stroke-width="0.17" textLength="54.66" lengthAdjust="spacingAndGlyphs">-285,00</text>
<text x="1597.74" y="1055.80" font-size="15.80" font-weight="normal" fill="#000" stroke="#000" stroke-width="0.17" textLength="31.31" lengthAdjust="spacingAndGlyphs">95%</text>
<text x="870.76" y="1095.80" font-size="15.80" font-weight="normal" fill="#000" stroke="#000" stroke-width="0.17" textLength="20.70" lengthAdjust="spacingAndGlyphs">Q3</text>
<text x="1047.27" y="1095.80" font-size="15.80" font-weight="normal" fill="#000" stroke="#000" stroke-width="0.17" textLength="62.74" lengthAdjust="spacingAndGlyphs">5 018,00</text>
<text x="1170.27" y="1095.80" font-size="15.80" font-weight="normal" fill="#000" stroke="#000" stroke-width="0.17" textLength="62.74" lengthAdjust="spacingAndGlyphs">5 250,00</text>
<text x="1301.27" y="1095.80" font-size="15.80" font-weight="normal" fill="#000" stroke="#000" stroke-width="0.17" textLength="54.66" lengthAdjust="spacingAndGlyphs">-232,00</text>
<text x="1597.74" y="1095.80" font-size="15.80" font-weight="normal" fill="#000" stroke="#000" stroke-width="0.17" textLength="31.31" lengthAdjust="spacingAndGlyphs">96%</text>
<text x="870.76" y="1135.80" font-size="15.80" font-weight="normal" fill="#000" stroke="#000" stroke-width="0.17" textLength="20.70" lengthAdjust="spacingAndGlyphs">Q4</text>
<text x="1047.27" y="1135.80" font-size="15.80" font-weight="normal" fill="#000" stroke="#000" stroke-width="0.17" textLength="62.74" lengthAdjust="spacingAndGlyphs">5 388,00</text>
<text x="1170.27" y="1135.80" font-size="15.80" font-weight="normal" fill="#000" stroke="#000" stroke-width="0.17" textLength="62.74" lengthAdjust="spacingAndGlyphs">5 250,00</text>
<text x="1306.63" y="1135.80" font-size="15.80" font-weight="normal" fill="#000" stroke="#000" stroke-width="0.17" textLength="49.29" lengthAdjust="spacingAndGlyphs">138,00</text>
<text x="1593.18" y="1135.80" font-size="15.80" font-weight="normal" fill="#000" stroke="#000" stroke-width="0.17" textLength="40.01" lengthAdjust="spacingAndGlyphs">103%</text>
<text x="871.33" y="1175.80" font-size="15.80" font-weight="bold" fill="#000" textLength="38.62" lengthAdjust="spacingAndGlyphs">Total</text>
<text x="1037.67" y="1175.80" font-size="15.80" font-weight="bold" fill="#000" textLength="72.40" lengthAdjust="spacingAndGlyphs">20 356,00</text>
<text x="1160.67" y="1175.80" font-size="15.80" font-weight="bold" fill="#000" textLength="72.40" lengthAdjust="spacingAndGlyphs">21 000,00</text>
<text x="1300.78" y="1175.80" font-size="15.80" font-weight="bold" fill="#000" textLength="55.20" lengthAdjust="spacingAndGlyphs">-644,00</text>
<text x="1597.78" y="1175.80" font-size="15.80" font-weight="bold" fill="#000" textLength="31.31" lengthAdjust="spacingAndGlyphs">97%</text>
</svg>
</body></html>
